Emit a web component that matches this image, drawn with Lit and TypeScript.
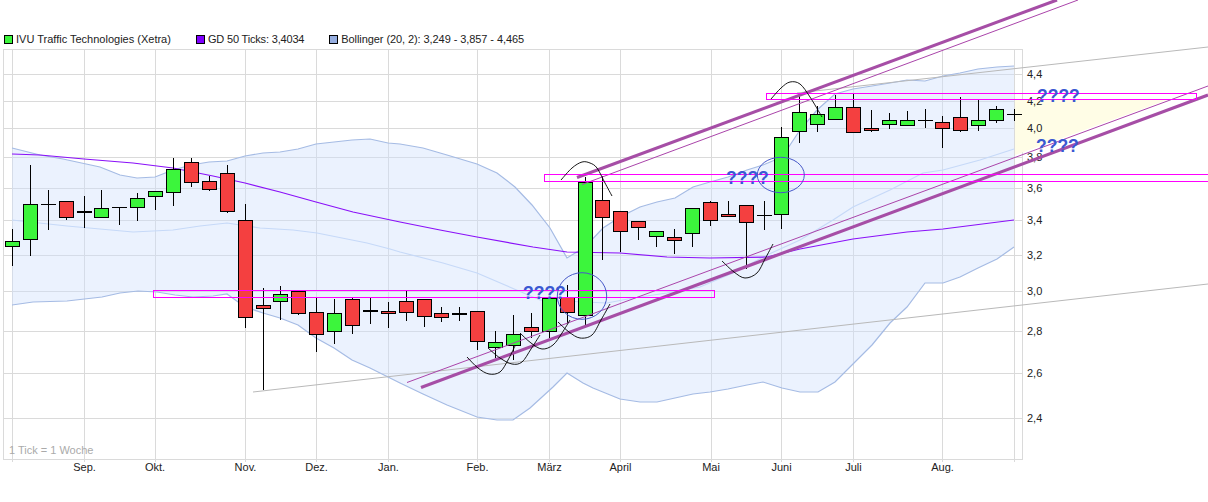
import { LitElement, html, svg, css } from 'lit';
import { customElement } from 'lit/decorators.js';

type Pt = [number, number];
// g = green, r = red, d = doji line, D = thick doji
type Candle = [string, number, number, number, number];

const candles: Candle[] = [
  ['g', 241.5, 246.5, 229, 266],
  ['g', 204.5, 239.5, 165, 256],
  ['d', 204.5, 204.5, 190, 230],
  ['r', 201.5, 217.5, 201, 220],
  ['D', 211.5, 211.5, 196, 228],
  ['g', 208.5, 217.5, 190, 218],
  ['d', 207.5, 207.5, 207, 225],
  ['g', 198.5, 207.5, 193, 221],
  ['g', 191.5, 196.5, 191, 210],
  ['g', 169.5, 192.5, 158, 206],
  ['r', 162.5, 182.5, 158, 187],
  ['r', 181.5, 189.5, 176, 191],
  ['r', 173.5, 211.5, 165, 213],
  ['r', 220.5, 317.5, 204, 328],
  ['r', 305.5, 308.5, 288, 390],
  ['g', 294.5, 301.5, 286, 320],
  ['r', 291.5, 313.5, 291, 315],
  ['r', 312.5, 334.5, 298, 352],
  ['g', 313.5, 331.5, 299, 344],
  ['r', 299.5, 325.5, 298, 334],
  ['D', 311, 311, 298, 324],
  ['r', 311.5, 313.5, 302, 328],
  ['r', 301.5, 312.5, 291, 321],
  ['r', 299.5, 316.5, 299, 327],
  ['r', 313.5, 317.5, 307, 322],
  ['D', 313.5, 313.5, 307, 321],
  ['r', 311.5, 341.5, 311, 350],
  ['g', 342.5, 347.5, 331, 358],
  ['g', 334.5, 345.5, 315, 360],
  ['r', 327.5, 331.5, 313, 338],
  ['g', 298.5, 331.5, 298, 338],
  ['r', 297.5, 312.5, 285, 323],
  ['g', 182.5, 315.5, 177, 325],
  ['r', 200.5, 217.5, 176, 260],
  ['r', 211.5, 231.5, 211, 252],
  ['r', 221.5, 227.5, 221, 240],
  ['g', 231.5, 236.5, 231, 247],
  ['r', 237.5, 240.5, 229, 254],
  ['g', 208.5, 233.5, 208, 247],
  ['r', 202.5, 220.5, 201, 226],
  ['r', 214.5, 216.5, 201, 217],
  ['r', 205.5, 222.5, 205, 269],
  ['d', 215.5, 215.5, 201, 230],
  ['g', 137.5, 214.5, 127, 229],
  ['g', 112.5, 131.5, 93, 143],
  ['g', 114.5, 124.5, 106, 132],
  ['g', 107.5, 119.5, 95, 120],
  ['r', 107.5, 132.5, 93, 133],
  ['r', 128.5, 130.5, 110, 132],
  ['g', 120.5, 124.5, 113, 129],
  ['g', 120.5, 125.5, 111, 126],
  ['d', 120.5, 120.5, 109, 128],
  ['r', 122.5, 128.5, 116, 148],
  ['r', 117.5, 130.5, 97, 132],
  ['g', 120.5, 125.5, 100, 131],
  ['g', 109.5, 120.5, 106, 123],
  ['d', 114.5, 114.5, 109, 121],
];

const upper: Pt[] = [[12, 148], [40, 155], [63, 159], [100, 167], [120, 175], [137, 178], [155, 177], [173, 170], [191, 165], [209, 162], [227, 161], [245, 156], [263, 153], [280, 152], [298, 149], [316, 144], [334, 142], [352, 140], [370, 139], [388, 143], [400, 144], [423, 148], [447, 155], [477, 164], [497, 173], [515, 187], [532, 205], [550, 228], [567, 258], [585, 247], [603, 228], [620, 217], [640, 207], [657, 202], [675, 198], [693, 187], [710, 182], [728, 177], [747, 170], [763, 165], [782, 157], [800, 130], [817, 110], [835, 94], [853, 89], [872, 86], [890, 83], [907, 80], [925, 81], [943, 76], [960, 73], [978, 69], [997, 67], [1014, 66]];
const lower: Pt[] = [[12, 305], [33, 302], [67, 301], [102, 297], [120, 293], [138, 291], [157, 292], [175, 295], [193, 297], [213, 296], [227, 294], [245, 307], [263, 313], [280, 318], [298, 325], [316, 338], [334, 348], [352, 360], [370, 368], [388, 377], [400, 383], [423, 394], [447, 405], [477, 417], [497, 420], [513, 420], [530, 408], [553, 387], [567, 373], [583, 383], [593, 388], [620, 399], [640, 402], [657, 402], [675, 398], [693, 394], [710, 392], [728, 389], [747, 385], [763, 382], [782, 388], [800, 392], [818, 392], [835, 382], [853, 364], [872, 345], [890, 323], [907, 307], [925, 283], [943, 283], [960, 277], [978, 268], [997, 259], [1014, 247]];
const middle: Pt[] = [[12, 220], [30, 222], [67, 226], [100, 229], [133, 232], [173, 230], [200, 226], [227, 223], [260, 228], [293, 230], [317, 233], [367, 243], [390, 249], [400, 252], [443, 263], [477, 273], [540, 300], [607, 303], [633, 298], [667, 293], [700, 287], [733, 273], [767, 255], [800, 240], [833, 220], [853, 207], [890, 190], [923, 173], [943, 170], [980, 160], [1014, 149]];
const gd50: Pt[] = [[12, 154], [40, 155], [84, 159], [133, 163], [173, 168], [213, 176], [245, 183], [280, 192], [316, 202], [353, 212], [400, 222], [440, 230], [477, 237], [533, 247], [567, 252], [620, 253], [667, 257], [710, 258], [767, 257], [800, 249], [853, 239], [907, 232], [943, 229], [1014, 220]];

const hGrid = [74.5, 101.5, 128.5, 157.5, 188.5, 220.5, 255.5, 291.5, 331.5, 373.5, 418.5];
const vGrid = [12.5, 84.5, 155.5, 245.5, 316.5, 388.5, 477.5, 549.5, 620.5, 711.5, 781.5, 853.5, 942.5, 1014.5];
const prices: [string, number][] = [['4,4', 74], ['4,2', 101], ['4,0', 128], ['3,8', 157], ['3,6', 188], ['3,4', 220], ['3,2', 255], ['3,0', 291], ['2,8', 331], ['2,6', 373], ['2,4', 418]];
const months: [string, number][] = [['Sep.', 84.5], ['Okt.', 155], ['Nov.', 245.5], ['Dez.', 316.5], ['Jan.', 388.5], ['Feb.', 477.5], ['März', 549.5], ['April', 620.5], ['Mai', 711], ['Juni', 781.5], ['Juli', 853.5], ['Aug.', 942.5]];

const curves: Pt[][] = [
  [[561, 180], [572, 168], [582, 162], [590, 163], [597, 168], [605, 183], [612, 196]],
  [[771, 99], [781, 88], [790, 82], [800, 84], [810, 97], [822, 117]],
  [[467, 357], [478, 368], [489, 374], [500, 372], [508, 360], [515, 346]],
  [[488, 348], [500, 358], [512, 364], [522, 362], [531, 349], [540, 335]],
  [[520, 333], [531, 343], [542, 349], [553, 345], [562, 333], [570, 320]],
  [[558, 322], [569, 332], [580, 338], [592, 335], [601, 320], [610, 304]],
  [[722, 261], [734, 272], [745, 278], [757, 273], [765, 259], [773, 244]],
];

const line = (p: Pt[]) => p.map(([x, y], i) => `${i ? 'L' : 'M'}${x} ${y}`).join('');

// catmull-rom to bezier, for the hand drawn arcs
const smooth = (p: Pt[]) => {
  let d = `M${p[0][0]} ${p[0][1]}`;
  for (let i = 0; i < p.length - 1; i++) {
    const a = p[i - 1] ?? p[i];
    const b = p[i];
    const c = p[i + 1];
    const e = p[i + 2] ?? c;
    d += `C${b[0] + (c[0] - a[0]) / 6} ${b[1] + (c[1] - a[1]) / 6} ${c[0] - (e[0] - b[0]) / 6} ${c[1] - (e[1] - b[1]) / 6} ${c[0]} ${c[1]}`;
  }
  return d;
};

@customElement('app-root')
export class AppRoot extends LitElement {
  static styles = css`
    :host {
      display: block;
      width: 1208px;
      height: 502px;
      overflow: hidden;
      background: #fff;
      font-family: 'Liberation Sans', Arial, sans-serif;
      font-size: 11px;
      color: #222;
    }
    .legend {
      display: flex;
      gap: 25px;
      height: 46px;
      box-sizing: border-box;
      padding: 32px 0 0 4px;
      line-height: 14px;
    }
    .item {
      display: flex;
      align-items: center;
      gap: 3px;
    }
    .avg-item { letter-spacing: -0.17px; }
    .boll-item { letter-spacing: -0.08px; }
    .swatch {
      width: 7px;
      height: 7px;
      border: 1px solid #000;
    }
    .price { background: #3cf53c; }
    .avg { background: #7f00ff; }
    .boll { background: #96aee0; }
    svg {
      display: block;
      overflow: visible;
    }
    svg text {
      font-size: 11px;
      fill: #222;
    }
    .grid { stroke: #dadada; stroke-width: 1; fill: none; shape-rendering: crispEdges; }
    .band { fill: rgba(205, 222, 252, 0.4); }
    .upper, .lower { fill: none; stroke: #a5bbe4; stroke-width: 1.2; }
    .middle { fill: none; stroke: #c6d9f8; stroke-width: 1.2; }
    .gd { fill: none; stroke: #8a10f8; stroke-width: 1.2; }
    .wick { stroke: #000; stroke-width: 1; shape-rendering: crispEdges; }
    .doji { stroke: #000; stroke-width: 1; shape-rendering: crispEdges; }
    .doji.thick { stroke-width: 2; }
    .body { stroke: #000; stroke-width: 1; shape-rendering: crispEdges; }
    .body.g { fill: #3cf53c; }
    .body.r { fill: #f44040; }
    .hilo { fill: none; stroke: #b9b9b9; stroke-width: 1; }
    .box { fill: none; stroke: #ff00ff; stroke-width: 1; shape-rendering: crispEdges; }
    .thick-line { stroke: #a64ea6; stroke-width: 3.1; }
    .thin-line { stroke: #aa44aa; stroke-width: 1; }
    .freehand { fill: none; stroke: #000; stroke-width: 0.9; }
    .ring { fill: none; stroke: #4658c8; stroke-width: 1; }
    .zone { fill: #fffde6; }
    svg text.note { fill: #aaa; }
    svg text.ask {
      font-size: 17.5px;
      font-weight: bold;
      fill: #3a58d2;
    }
  `;

  private renderCandle(c: Candle, i: number) {
    const [kind, top, bottom, hi, lo] = c;
    const x = Math.round(12.5 + 17.893 * i - 0.5) + 0.5;
    const wick = svg`<line class="wick" x1=${x} x2=${x} y1=${hi} y2=${lo}></line>`;
    if (kind === 'd' || kind === 'D') {
      return svg`${wick}<line class="doji ${kind === 'D' ? 'thick' : ''}" x1=${x - 7.5} x2=${x + 7.5} y1=${top} y2=${top}></line>`;
    }
    return svg`${wick}<rect class="body ${kind}" x=${x - 7} y=${top} width="14" height=${bottom - top}></rect>`;
  }

  render() {
    const bandPath = line(upper) + line([...lower].reverse()).replace('M', 'L') + 'Z';
    return html`
      <div class="legend">
        <div class="item"><span class="swatch price"></span>IVU Traffic Technologies (Xetra)</div>
        <div class="item avg-item"><span class="swatch avg"></span>GD 50 Ticks: 3,4034</div>
        <div class="item boll-item"><span class="swatch boll"></span>Bollinger (20, 2): 3,249 - 3,857 - 4,465</div>
      </div>
      <svg width="1208" height="456" viewBox="0 46 1208 456">
        <rect class="grid" x="3.5" y="49.5" width="1019" height="410"></rect>
        ${hGrid.map((y) => svg`<line class="grid" x1="3.5" x2="1023" y1=${y} y2=${y}></line>`)}
        ${vGrid.map((x) => svg`<line class="grid" x1=${x} x2=${x} y1="50" y2="462"></line>`)}
        <path class="zone" d="M1015 100L1167 100L1015 155Z"></path>
        <path class="band" d=${bandPath}></path>
        <path class="middle" d=${line(middle)}></path>
        <path class="upper" d=${line(upper)}></path>
        <path class="lower" d=${line(lower)}></path>
        <path class="gd" d=${line(gd50)}></path>
        ${prices.map(([t, y]) => svg`<text x="1027" y=${y + 4}>${t}</text>`)}
        ${months.map(([t, x]) => svg`<text x=${x} y="471" text-anchor="middle">${t}</text>`)}
        <text class="note" x="9" y="454">1 Tick = 1 Woche</text>
        ${candles.map((c, i) => this.renderCandle(c, i))}
        <line class="hilo" x1="253" y1="392" x2="1208" y2="284"></line>
        <line class="hilo" x1="797" y1="93" x2="1208" y2="47"></line>
        <line class="thin-line" x1="407" y1="382.5" x2="1208" y2="86"></line>
        <line class="thin-line" x1="582" y1="184.5" x2="1078" y2="0"></line>
        <line class="thick-line" x1="421" y1="387.5" x2="1208" y2="95"></line>
        <line class="thick-line" x1="577" y1="177.5" x2="1057" y2="0"></line>
        <rect class="box" x="153.5" y="290.5" width="561" height="7"></rect>
        <path class="box" d="M1208 174.5H544.5V181.5H1208"></path>
        <rect class="box" x="766.5" y="93.5" width="430" height="6"></rect>
        ${curves.map((c) => svg`<path class="freehand" d=${smooth(c)}></path>`)}
        <ellipse class="ring" cx="582" cy="296" rx="24.7" ry="23.3"></ellipse>
        <ellipse class="ring" cx="780.8" cy="175" rx="23.5" ry="17.7"></ellipse>
        <text class="ask" x="523" y="299">????</text>
        <text class="ask" x="726" y="184">????</text>
        <text class="ask" x="1037" y="102">????</text>
        <text class="ask" x="1036" y="152">????</text>
      </svg>
    `;
  }
}
